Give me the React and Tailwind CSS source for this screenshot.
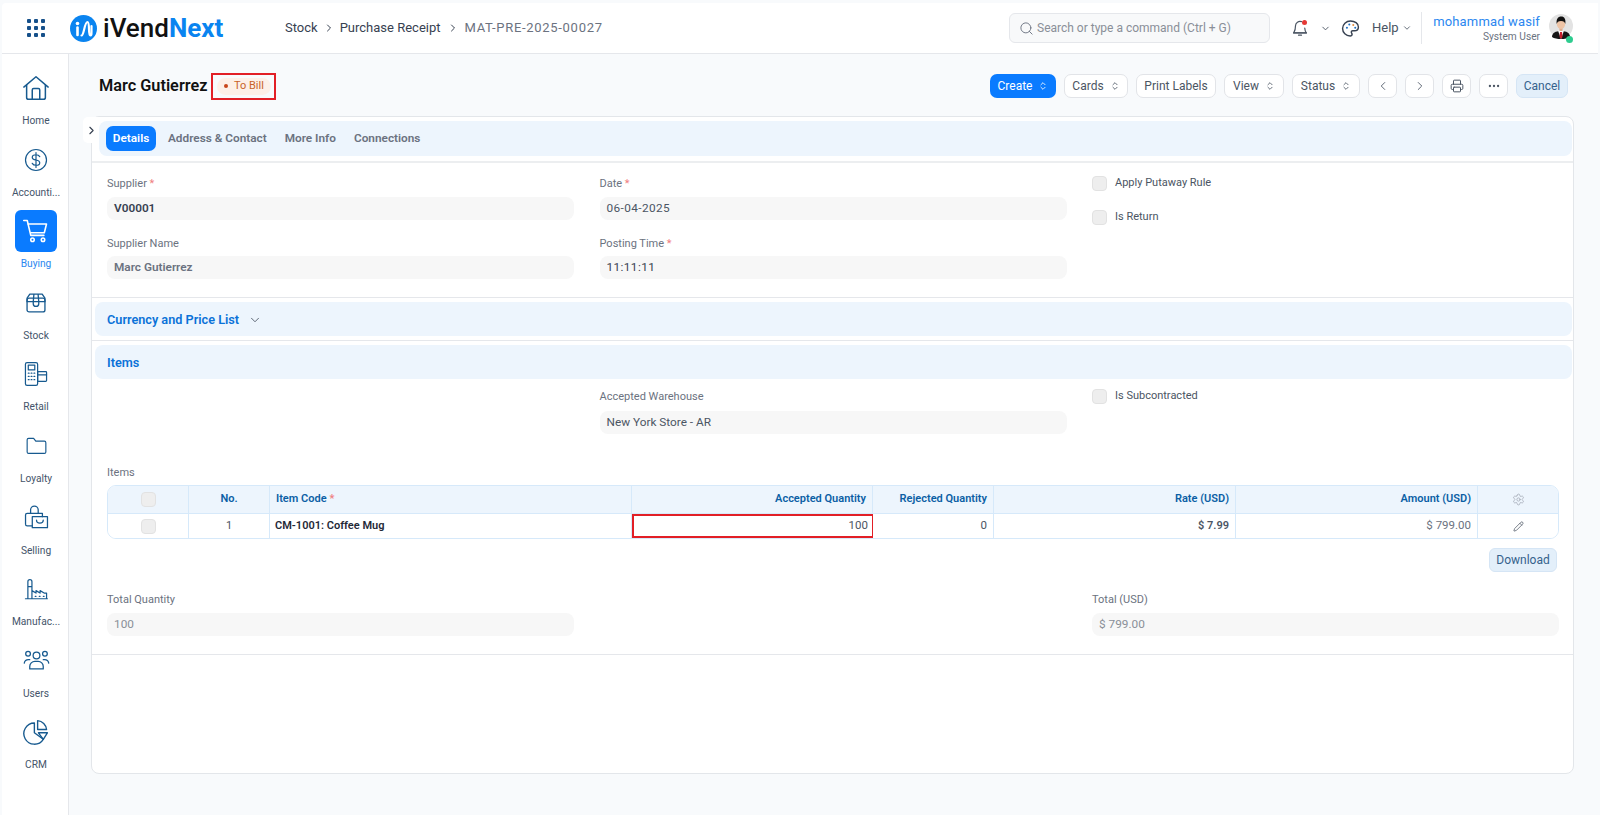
import React from "react";
import { Search, ChevronDown, ChevronRight, ChevronLeft, Printer, Ellipsis, Settings, Pencil, ChevronsUpDown } from "lucide-react";

const ICON = "#175a8f";
const S = ({ children, size = 32, color = ICON, sw = 1.6 }) => (
  <svg width={size} height={size} viewBox="0 0 32 32" fill="none" stroke={color} strokeWidth={sw} strokeLinecap="round" strokeLinejoin="round">{children}</svg>
);
const HomeI = () => <S size={30}><path d="M3 15 16 4l13 11" /><path d="M6 13v13a2 2 0 0 0 2 2h16a2 2 0 0 0 2-2V13" /><path d="M12 28V18a1.500 1.500 0 0 1 1.500-1.500h5A1.500 1.500 0 0 1 20 18v10" /></S>;
const DollarI = () => <S size={24}><circle cx="16" cy="16" r="14" /><path d="M21 11.500c-1-1.700-3-2.500-5-2.500-2.800 0-5 1.400-5 3.500 0 4.800 10 2.200 10 7 0 2.100-2.200 3.500-5 3.500-2.100 0-4-.8-5-2.500M16 6v20" /></S>;
const CartI = () => <S size={28} color="#fff" sw={1.8}><path d="M2 4h4l4 17h15" /><path d="M7 8h21l-2.500 10H10" /><circle cx="12" cy="26" r="2" /><circle cx="24" cy="26" r="2" /></S>;
const BoxI = () => <S size={22} sw={1.9}><path d="M3 12a3 3 0 0 1 3-3h20a3 3 0 0 1 3 3v14a3 3 0 0 1-3 3H6a3 3 0 0 1-3-3Z" /><path d="M3 14V9l4-6h18l4 6v5M3 14h26M12 14l1-11M20 14l-1-11M12 14v3a4 4 0 0 0 8 0v-3" /></S>;
const PosI = () => <S size={26} sw={1.5}><rect x="3" y="2" width="15" height="28" rx="2" /><rect x="6.500" y="5" width="8" height="6" /><path d="M6.500 15h1M10 15h1M13.500 15h1M6.500 19h1M10 19h1M13.500 19h1M6.500 23h1M10 23h1M13.500 23h1" /><rect x="18" y="13" width="11" height="12" rx="1" /><path d="M18 17h11" /></S>;
const FolderI = () => <S size={23}><path d="M3 8a2 2 0 0 1 2-2h7l3 4h12a2 2 0 0 1 2 2v13a2 2 0 0 1-2 2H5a2 2 0 0 1-2-2Z" /></S>;
const SellI = () => <S size={27} sw={1.5}><path d="M3 24V13a2 2 0 0 1 2-2h18v4M3 24a2 2 0 0 0 2 2h6" /><path d="M9 11V7a4.500 4.500 0 0 1 9 0v4" /><rect x="11" y="15" width="18" height="13" /><path d="M16 19c0 5 8 5 8 0" /></S>;
const FactI = () => <S size={26} sw={1.5}><path d="M6 28V7a2.500 2.500 0 0 1 5 0v21M3 28h27M6 13h5M11 28V18l5 3v-3l5 3v-3l5 3h3v7M15 25h1M20 25h1M25 25h1" /></S>;
const UsersI = () => <S size={27} sw={1.5}><circle cx="16" cy="10" r="4" /><circle cx="6" cy="8" r="2.800" /><circle cx="26" cy="8" r="2.800" /><path d="M8 26v-3a6 6 0 0 1 6-6h4a6 6 0 0 1 6 6v3Z" /><path d="M1.500 19a5 5 0 0 1 5-4h1.500M30.500 19a5 5 0 0 0-5-4H24" /></S>;
const PieI = () => <S size={26} sw={1.7}><path d="M14 5a13 13 0 1 0 11 20l-11-8Z" /><path d="M18 2a12 12 0 0 1 11 11H18Z" /><path d="M19 17h11l-5 8Z" /></S>;

const NAV = [
  ["Home", <HomeI />], ["Accounti...", <DollarI />], ["Buying", <CartI />, true], ["Stock", <BoxI />], ["Retail", <PosI />],
  ["Loyalty", <FolderI />], ["Selling", <SellI />], ["Manufac...", <FactI />], ["Users", <UsersI />], ["CRM", <PieI />],
];

const Btn = ({ children, chev, primary, cls = "" }) => (
  <button className={`h-[24px] rounded-[7px] flex items-center justify-center gap-[6px] text-[12px] ${primary ? "bg-[#0a7bff] text-white" : "bg-white border border-[#e2e4e8] text-[#4b5563]"} ${cls}`}>
    {children}
    {chev && <ChevronsUpDown size={10} strokeWidth={2} />}
  </button>
);

const Label = ({ children, req, mb = "mb-[6px]" }) => (
  <div className={`h-[16px] ${mb} text-[11px] leading-[16px] text-[#6b7280]`}>{children}{req && <span className="text-[#f08080]"> *</span>}</div>
);
const Field = ({ children, cls = "text-[#6b7280]" }) => (
  <div className={`h-[23px] rounded-[8px] bg-[#f7f7f7] px-[7px] flex items-center text-[11.800px] ${cls}`}>{children}</div>
);
const Check = ({ label }) => (
  <div className="h-[16px] flex items-center gap-[8px] text-[11px] text-[#4b5563]">
    <span className="w-[15px] h-[15px] rounded-[4px] bg-[#eeeeee] border border-[#e2e2e2]" />{label}
  </div>
);
const Cell = ({ children, cls = "" }) => (
  <div className={`flex items-center px-[6px] border-r border-[#d6e9fa] last:border-r-0 ${cls}`}>{children}</div>
);
const GRID = "grid grid-cols-[81px_81px_362px_241px_121px_242px_242px_auto]";
const COLS = "grid grid-cols-[467px_467px_467px] gap-x-[25.500px]";

const Avatar = () => (
  <svg width="24" height="25" viewBox="0 0 24 25">
    <circle cx="12" cy="12" r="12" fill="#e3e3e3" />
    <path d="M3 23c0-4 3.500-6 9-6s9 2 9 6c-2 1.500-5.500 2-9 2s-7-.5-9-2Z" fill="#151515" />
    <path d="M9 16.500h6L12 25Z" fill="#fff" />
    <path d="M11 18h2l.5 5-1.500 2-1.500-2Z" fill="#c81e2c" />
    <rect x="10.500" y="13" width="3" height="4" fill="#e0ab8c" />
    <ellipse cx="12" cy="10" rx="4.200" ry="5" fill="#eec4a6" />
    <path d="M7.700 10c-.7-5 1.300-7.500 4.500-7.500s4.800 2.500 4.100 7.500c-.6-2-1.500-3-4.300-3s-3.700 1-4.300 3Z" fill="#111" />
  </svg>
);

export default function App() {
  return (
    <div className="w-[1600px] h-[815px] overflow-hidden bg-[#f8fafc] flex flex-col font-['Roboto',sans-serif] pt-[3px] pl-[2px]">
      <header className="h-[51px] shrink-0 bg-white border-b border-[#e5e7eb] flex items-center mr-[2px] rounded-tl-[4px]">
        <div className="ml-[25px] w-[18px] h-[18px] grid grid-cols-3 gap-[2.500px]">
          {Array.from({ length: 9 }).map((_, i) => <span key={i} className="bg-[#16508a] rounded-[1px]" />)}
        </div>
        <svg className="ml-[25px]" width="27" height="27" viewBox="0 0 27 27">
          <circle cx="13.500" cy="13.500" r="13.500" fill="#0a84f0" />
          <circle cx="7.500" cy="8.500" r="1.800" fill="#fff" />
          <path d="M7.500 12.500v7.500" stroke="#fff" strokeWidth="2.600" strokeLinecap="round" />
          <path d="M11.500 20.500c2.500 0 3-13.500 6-13.500 2.500 0 .5 13.500 2.700 13.500 1.300 0 1.300-1 1.300-4V11" stroke="#fff" strokeWidth="2.200" fill="none" strokeLinecap="round" strokeLinejoin="round" />
        </svg>
        <div className="ml-[6px] w-[120px] whitespace-nowrap text-[26px] leading-none font-medium text-[#111]">iVend<span className="text-[#0a84f0] font-bold">Next</span></div>
        <nav className="ml-[62px] flex items-center text-[13px] text-[#374151]">
          <span>Stock</span>
          <ChevronRight size={12} className="mx-[5px]" />
          <span>Purchase Receipt</span>
          <ChevronRight size={12} className="mx-[6px]" />
          <span className="text-[#6b7280] tracking-[0.7px]">MAT-PRE-2025-00027</span>
        </nav>
        <div className="ml-auto w-[261px] h-[30px] rounded-[6px] bg-[#f8f9fa] border border-[#e5e7eb] flex items-center gap-[3px] pl-[9px] text-[12px] text-[#8a8f98]">
          <Search size={15} strokeWidth={1.5} className="text-[#6b7280]" />Search or type a command (Ctrl + G)
        </div>
        <div className="ml-[21px] relative w-[18px] h-[18px]">
          <svg width="18" height="18" viewBox="0 0 24 24" fill="none" stroke="#4b5563" strokeWidth="1.600" strokeLinecap="round" strokeLinejoin="round"><path d="M14 3.500A6 6 0 0 0 6 9c0 6-1 7-2.500 9.500h17C19 16.500 18.500 15 18.300 12" /><path d="M3.500 18.500h17M10 21.500h4" /></svg>
          <span className="absolute top-[1px] right-[2px] w-[5px] h-[5px] rounded-full bg-[#e53935]" />
        </div>
        <ChevronDown size={11} className="ml-[11px] text-[#4b5563]" />
        <svg className="ml-[10px]" width="19" height="19" viewBox="0 0 24 24" fill="none" strokeLinecap="round" strokeLinejoin="round">
          <path d="M12 2.500C6.500 2.500 2 6.800 2 12s4.300 9.500 9.500 9.500c1.700 0 2.500-1 2.500-2.200 0-.7-.4-1.200-.7-1.700-.4-.6-.5-1.300-.1-1.900.4-.7 1.100-.9 1.800-.9H17c2.800 0 5-1.800 5-4.800 0-4.300-4.500-7.500-10-7.500Z" stroke="#374151" strokeWidth="1.800" />
          <circle cx="7.500" cy="11" r="1.300" fill="#1d6fc4" /><circle cx="10.500" cy="7" r="1.300" fill="#1d6fc4" /><circle cx="15.500" cy="7.500" r="1.300" fill="#e08a3c" /><circle cx="18" cy="11" r="1.300" fill="#1d6fc4" />
        </svg>
        <span className="ml-[12px] text-[13px] text-[#4b5563] w-[27px]">Help</span>
        <ChevronDown size={10} className="ml-[3px] text-[#4b5563]" />
        <span className="ml-[9px] w-px h-[32px] bg-[#e5e7eb]" />
        <div className="ml-[11px] w-[107px] flex flex-col items-end">
          <span className="text-[13px] leading-[18px] tracking-[0.15px] whitespace-nowrap text-[#2b87f0]">mohammad wasif</span>
          <span className="text-[10.200px] leading-[12px] text-[#6b7280]">System User</span>
        </div>
        <div className="ml-[9px] mr-[25px] relative mt-[-3px]">
          <Avatar />
          <span className="absolute right-[0px] bottom-[-4px] w-[7px] h-[7px] rounded-full bg-[#2ecc8f]" />
        </div>
      </header>

      <div className="flex-1 flex min-h-0">
        <aside className="w-[67px] shrink-0 bg-white border-r border-[#e5e7eb] pt-[13px] pl-[2px]">
          {NAV.map(([label, icon, active]) => (
            <div key={label} className="h-[71.600px] flex flex-col items-center">
              <div className={`w-[42px] h-[42px] rounded-[6px] flex items-center justify-center ${active ? "bg-[#0a7bff]" : ""}`}>{icon}</div>
              <div className={`mt-[5px] text-[10.200px] leading-[14px] whitespace-nowrap ${active ? "text-[#2b87f0]" : "text-[#44546a]"}`}>{label}</div>
            </div>
          ))}
        </aside>

        <main className="flex-1 min-w-0">
          <div className="h-[62px] flex items-center pl-[30px] pr-[32px] pt-[2px]">
            <h1 className="text-[16.300px] font-semibold text-[#111]">Marc Gutierrez</h1>
            <div className="ml-[4px] w-[65px] h-[27px] border-2 border-[#e21f26] flex items-center justify-center">
              <span className="w-[54px] h-[17px] rounded-full bg-[#fdf0e8] flex items-center justify-center gap-[6px] text-[11px] text-[#c8622a]">
                <span className="w-[4px] h-[4px] rounded-full bg-[#c8451a]" />To Bill
              </span>
            </div>
            <div className="ml-auto flex items-center gap-[8px]">
              <Btn primary chev cls="w-[66px]">Create</Btn>
              <Btn chev cls="w-[64px]">Cards</Btn>
              <Btn cls="w-[80px]">Print Labels</Btn>
              <Btn chev cls="w-[60px]">View</Btn>
              <Btn chev cls="w-[68px]">Status</Btn>
              <Btn cls="w-[29px]"><ChevronLeft size={14} strokeWidth={1.5} /></Btn>
              <Btn cls="w-[29px]"><ChevronRight size={14} strokeWidth={1.5} /></Btn>
              <Btn cls="w-[29px]"><Printer size={14} strokeWidth={1.7} /></Btn>
              <Btn cls="w-[29px]"><Ellipsis size={14} /></Btn>
              <Btn cls="w-[52px] !bg-[#e3effa] !text-[#35628c] !border-[#d5e5f5]">Cancel</Btn>
            </div>
          </div>

          <section className="relative ml-[22px] mr-[26px] h-[658px] bg-white border border-[#e3e6ea] rounded-[8px] pt-[4px]">
            <div className="absolute left-[-9px] top-[0px] w-[16px] h-[26px] rounded-l-[5px] bg-white flex items-center justify-center">
              <ChevronRight size={13} className="text-[#374151]" />
            </div>
            <div className="ml-[7px] mr-[1px] h-[35px] rounded-[8px] bg-[#edf5fd] flex items-center pl-[7px] gap-[18px] text-[11.800px] font-semibold text-[#6b7280]">
              <span className="w-[50px] h-[25px] rounded-[7px] bg-[#0a7bff] text-white flex items-center justify-center">Details</span>
              <span className="-ml-[6px]">Address &amp; Contact</span>
              <span>More Info</span>
              <span>Connections</span>
            </div>

            <div className="mt-[5px] border-t-2 border-[#eceef0] h-[137px] border-b pl-[15px] border-b-[#e5e7eb] pt-[13px]">
              <div className={COLS}>
                <div>
                  <Label req mb="mb-[5px]">Supplier</Label>
                  <Field cls="font-semibold text-[#374151]">V00001</Field>
                  <div className="mt-[16px]"><Label mb="mb-[4px]">Supplier Name</Label></div>
                  <Field cls="font-semibold text-[#6b7280]">Marc Gutierrez</Field>
                </div>
                <div>
                  <Label req mb="mb-[5px]">Date</Label>
                  <Field cls="text-[#4b5563] tracking-[0.4px]">06-04-2025</Field>
                  <div className="mt-[16px]"><Label req mb="mb-[4px]">Posting Time</Label></div>
                  <Field cls="text-[#374151] tracking-[0.4px]">11:11:11</Field>
                </div>
                <div className="flex flex-col gap-[18px] -mt-[1px]">
                  <Check label="Apply Putaway Rule" />
                  <Check label="Is Return" />
                </div>
              </div>
            </div>

            <div className="mt-[4px] ml-[3px] mr-[1px] h-[34px] pt-[1px] rounded-[8px] bg-[#edf5fd] flex items-center pl-[12px] text-[12.700px] font-semibold text-[#0a72d8]">
              Currency and Price List<ChevronDown size={14} strokeWidth={1.5} className="ml-[9px] text-[#4b5563]" />
            </div>
            <div className="mt-[4px] border-t border-[#e5e7eb] pt-[4px]">
              <div className="ml-[3px] mr-[1px] h-[34px] pt-[1px] rounded-[8px] bg-[#edf5fd] flex items-center pl-[12px] text-[12.700px] font-semibold text-[#0a72d8]">Items</div>
            </div>

            <div className="pl-[15px] pt-[10px] border-b border-[#e5e7eb] h-[276px]">
              <div className={COLS}>
                <div />
                <div><Label>Accepted Warehouse</Label><Field cls="text-[#4b5563]">New York Store - AR</Field></div>
                <div className="-mt-[1px]"><Check label="Is Subcontracted" /></div>
              </div>
              <div className="mt-[31px] h-[16px] text-[11px] leading-[16px] text-[#6b7280]">Items</div>
              <div className="mt-[4px] w-[1452px] rounded-[9px] border border-[#d6e9fa] overflow-hidden text-[11px]">
                <div className={`${GRID} h-[28px] bg-[#edf5fd] border-b border-[#d6e9fa] font-semibold text-[#0b5fa5]`}>
                  <Cell cls="justify-center"><span className="w-[15px] h-[15px] rounded-[4px] bg-[#eeeeee] border border-[#e2e2e2]" /></Cell>
                  <Cell cls="justify-center">No.</Cell>
                  <Cell>Item Code<span className="text-[#f08080] ml-[3px]">*</span></Cell>
                  <Cell cls="justify-end">Accepted Quantity</Cell>
                  <Cell cls="justify-end">Rejected Quantity</Cell>
                  <Cell cls="justify-end">Rate (USD)</Cell>
                  <Cell cls="justify-end">Amount (USD)</Cell>
                  <Cell cls="justify-center"><Settings size={13} strokeWidth={1.3} className="text-[#9ca3af]" /></Cell>
                </div>
                <div className={`${GRID} h-[24px] bg-white text-[#4b5563]`}>
                  <Cell cls="justify-center"><span className="w-[15px] h-[15px] rounded-[4px] bg-[#eeeeee] border border-[#e2e2e2]" /></Cell>
                  <Cell cls="justify-center">1</Cell>
                  <Cell cls="font-semibold text-[#1f2937] !px-[5px]">CM-1001: Coffee Mug</Cell>
                  <Cell cls="justify-end border-2 !border-[#e21f26] !pr-[4px] text-[11.500px]">100</Cell>
                  <Cell cls="justify-end text-[11.500px]">0</Cell>
                  <Cell cls="justify-end font-semibold">$ 7.99</Cell>
                  <Cell cls="justify-end text-[#6b7280] text-[11.500px]">$ 799.00</Cell>
                  <Cell cls="justify-center"><Pencil size={11} strokeWidth={1.6} /></Cell>
                </div>
              </div>
              <div className="mt-[9px] w-[1450px] flex justify-end">
                <button className="w-[68px] h-[24px] rounded-[6px] bg-[#e3effa] border border-[#d5e5f5] text-[12px] text-[#35628c]">Download</button>
              </div>
              <div className={`mt-[20px] ${COLS}`}>
                <div><Label mb="mb-[5px]">Total Quantity</Label><Field cls="text-[#8a8f98]">100</Field></div>
                <div />
                <div><Label mb="mb-[5px]">Total (USD)</Label><Field cls="text-[#8a8f98]">$ 799.00</Field></div>
              </div>
            </div>
          </section>
        </main>
      </div>
    </div>
  );
}
